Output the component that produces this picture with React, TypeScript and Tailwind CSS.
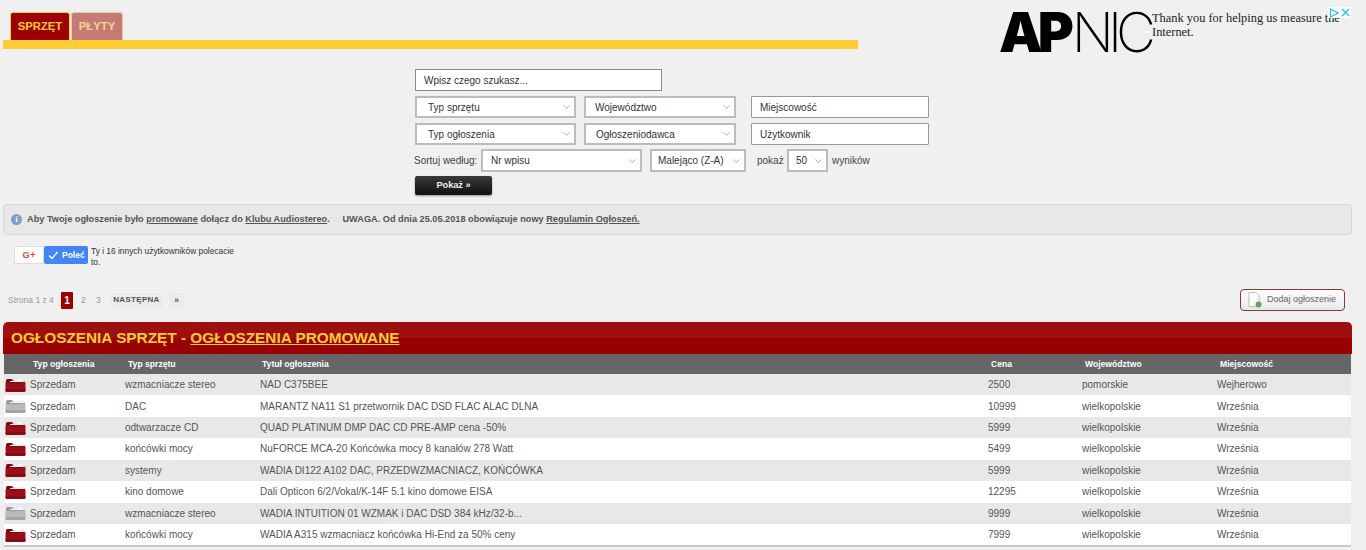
import { ChevronDown } from "lucide-react";

const rows = [
  [1, "wzmacniacze stereo", "NAD C375BEE", "2500", "pomorskie", "Wejherowo"],
  [0, "DAC", "MARANTZ NA11 S1 przetwornik DAC DSD FLAC ALAC DLNA", "10999", "wielkopolskie", "Września"],
  [1, "odtwarzacze CD", "QUAD PLATINUM DMP DAC CD PRE-AMP cena -50%", "5999", "wielkopolskie", "Września"],
  [1, "końcówki mocy", "NuFORCE MCA-20 Końcówka mocy 8 kanałów 278 Watt", "5499", "wielkopolskie", "Września"],
  [1, "systemy", "WADIA DI122 A102 DAC, PRZEDWZMACNIACZ, KOŃCÓWKA", "5999", "wielkopolskie", "Września"],
  [1, "kino domowe", "Dali Opticon 6/2/Vokal/K-14F 5.1 kino domowe EISA", "12295", "wielkopolskie", "Września"],
  [0, "wzmacniacze stereo", "WADIA INTUITION 01 WZMAK i DAC DSD 384 kHz/32-b...", "9999", "wielkopolskie", "Września"],
  [1, "końcówki mocy", "WADIA A315 wzmacniacz końcówka Hi-End za 50% ceny", "7999", "wielkopolskie", "Września"],
] as const;

function Folder({ red }: { red: boolean }) {
  const back = red ? "#7d0a12" : "#9a9a9a";
  const front = red ? "#9c0f1a" : "#b9b9b9";
  return (
    <svg width="21" height="16" viewBox="0 0 21 16" className="shrink-0">
      <path d="M1 3.5 Q1 2 2.5 2 H7 L8.5 3.5 H18 Q19.5 3.5 19.5 5 V8 H1 Z" fill={back} />
      <path d="M5 4.2 L18 1.6 L19 5 H5 Z" fill="#f4f4f4" />
      <path d="M0.5 5.6 Q8 7 20.5 5.2 V13.5 Q20.5 15 19 15 H2 Q0.5 15 0.5 13.5 Z" fill={front} />
      <path d="M0.5 12 H20.5 V13.5 Q20.5 15 19 15 H2 Q0.5 15 0.5 13.5 Z" fill={back} opacity="0.7" />
    </svg>
  );
}

function Sel({ label, wrap, pad }: { label: string; wrap: string; pad: string }) {
  return (
    <div className={`relative ${wrap}`}>
      <select className={`appearance-none block w-full h-full bg-white border-2 border-[#bcbcbc] text-[10px] text-[#333] font-['Liberation_Sans',Arial,sans-serif] ${pad}`}>
        <option>{label}</option>
      </select>
      <ChevronDown size={11} strokeWidth={1.5} className="absolute right-[4px] top-1/2 -translate-y-1/2 text-[#888] pointer-events-none" />
    </div>
  );
}

const inputCls =
  "h-[22px] bg-white border border-[#999] rounded-[1px] text-[10px] text-[#333] px-2 placeholder:text-[#333] font-['Liberation_Sans',Arial,sans-serif]";

export default function App() {
  return (
    <div className="w-[1366px] h-[550px] overflow-hidden bg-[#f0f0f0] text-[#444] font-['Liberation_Sans',Arial,sans-serif]">
      <div className="flex h-[69px] pl-[3px]">
        <div className="w-[855px] pt-[12px]">
          <div className="flex pl-[7px] h-[28px] gap-[1px]">
            <div className="w-[60px] flex items-center justify-center bg-[#9c0000] border border-[#ffcc33] border-b-0 rounded-t-[3px] text-[11.3px] font-bold text-[#ffcc33]">SPRZĘT</div>
            <div className="w-[52px] flex items-center justify-center bg-[#c67a78] border border-[#f0c890] border-b-0 rounded-t-[3px] text-[11.3px] font-bold text-[#f3d58c]">PŁYTY</div>
          </div>
          <div className="h-[9px] bg-[#ffcc33]" />
        </div>
        <div className="ml-[141px] w-[153px] pt-[12px] flex items-start text-black text-[55px] leading-[40px] font-['Inter',sans-serif] whitespace-nowrap">
          <span className="font-black tracking-[-5px]">AP</span>
          <span className="font-extralight tracking-[-6px] ml-[3px]">NIC</span>
        </div>
        <div className="w-[195px] pt-[11px] text-[12.4px] leading-[14px] text-[#222] font-['Liberation_Serif',serif]">Thank you for helping us measure the Internet.</div>
        <div className="relative">
          <div className="absolute left-[-19px] top-[7px] w-[23px] h-[11px] bg-white flex items-center justify-around">
            <svg width="10" height="10" viewBox="0 0 10 10"><path d="M1.5 1 L9 5 L1.5 9 Z" fill="none" stroke="#2bbfe8" strokeWidth="1.3" /></svg>
            <svg width="9" height="9" viewBox="0 0 9 9"><path d="M1 1 L8 8 M8 1 L1 8" stroke="#2bbfe8" strokeWidth="1.3" /></svg>
          </div>
        </div>
      </div>

      <div className="pl-[415px] h-[135px]">
        <input readOnly placeholder="Wpisz czego szukasz..." className="block w-[247px] h-[22px] bg-white border border-[#888] text-[10px] px-2 placeholder:text-[#333]" />
        <div className="flex mt-[5px]">
          <Sel label="Typ sprzętu" wrap="w-[161px] h-[22px]" pad="pl-[11px]" />
          <Sel label="Województwo" wrap="w-[152px] h-[22px] ml-[8px]" pad="pl-[9px]" />
          <input readOnly placeholder="Miejscowość" className={`${inputCls} w-[178px] ml-[15px]`} />
        </div>
        <div className="flex mt-[5px]">
          <Sel label="Typ ogłoszenia" wrap="w-[161px] h-[22px]" pad="pl-[11px]" />
          <Sel label="Ogłoszeniodawca" wrap="w-[152px] h-[22px] ml-[8px]" pad="pl-[10px]" />
          <input readOnly placeholder="Użytkownik" className={`${inputCls} w-[178px] ml-[15px]`} />
        </div>
        <div className="flex items-center mt-[4px] ml-[-1px] h-[23px] text-[10px] text-[#444]">
          <span className="w-[67px] whitespace-nowrap">Sortuj według:</span>
          <Sel label="Nr wpisu" wrap="w-[161px] h-[23px]" pad="pl-[8px]" />
          <Sel label="Malejąco (Z-A)" wrap="w-[96px] h-[23px] ml-[8px]" pad="pl-[6px]" />
          <span className="ml-[11px] w-[30px]">pokaż</span>
          <Sel label="50" wrap="w-[41px] h-[23px]" pad="pl-[7px]" />
          <span className="ml-[4px]">wyników</span>
        </div>
        <div className="mt-[4px] w-[77px] h-[19px] rounded-[2px] bg-gradient-to-b from-[#3a3a3a] to-[#111] shadow-[0_1px_2px_rgba(0,0,0,0.4)] flex items-center justify-center text-[9.2px] font-bold text-[#eee]">Pokaż »</div>
      </div>

      <div className="ml-[3px] w-[1349px] h-[31px] bg-[#e8e8e8] border border-[#d8d8d8] rounded-[4px] flex items-center pl-[7px] text-[9.2px] font-bold text-[#555] whitespace-pre">
        <span className="w-[11px] h-[11px] rounded-full bg-[#7f9fc9] text-white text-[8px] leading-[11px] text-center mr-[5px] font-['Liberation_Serif',serif]">i</span>
        Aby Twoje ogłoszenie było <u className="font-bold">promowane</u> dołącz do <u>Klubu Audiostereo</u>.     UWAGA. Od dnia 25.05.2018 obowiązuje nowy <u>Regulamin Ogłoszeń.</u>
      </div>

      <div className="flex ml-[14px] mt-[11px] h-[42px]">
        <div className="w-[30px] h-[18px] bg-white border border-[#ddd] flex items-center justify-center text-[9.5px] font-bold text-[#dd4b39]">G+</div>
        <div className="w-[44px] h-[18px] bg-[#4285f4] rounded-[2px] flex items-center pl-[4px] gap-[4px] text-[8.5px] font-bold text-white">
          <svg width="10" height="10" viewBox="0 0 10 10"><path d="M1 5.5 L4 8.5 L9.5 2" fill="none" stroke="#fff" strokeWidth="1.3" /></svg>
          Poleć
        </div>
        <div className="w-[150px] ml-[3px] text-[8.4px] leading-[11px] text-[#333]">Ty i 16 innych użytkowników polecacie to.</div>
      </div>

      <div className="flex items-center h-[24px] pl-[8px] text-[8.5px] text-[#999]">
        <span className="w-[53px] whitespace-nowrap">Strona 1 z 4</span>
        <span className="w-[12px] h-[17px] bg-[#9c0000] rounded-[1px] text-white font-bold text-[10px] flex items-center justify-center">1</span>
        <span className="ml-[7px] w-[15px] pl-[1px]">2</span>
        <span className="w-[15px] pl-[1px]">3</span>
        <span className="w-[53px] h-[15px] bg-[#ebebeb] flex items-center justify-center font-bold text-[#555] text-[8px] tracking-[0.3px]">NASTĘPNA</span>
        <span className="ml-[6px] w-[15px] h-[15px] bg-[#ebebeb] flex items-center justify-center font-bold text-[#555]">»</span>
        <div className="ml-auto mr-[21px] mb-[1px] w-[105px] h-[22px] bg-gradient-to-b from-white to-[#e8e8e8] border border-[#8a3a3a] rounded-[4px] flex items-center pl-[7px] gap-[5px] text-[9px] text-[#666] whitespace-nowrap">
          <svg width="14" height="16" viewBox="0 0 14 16"><path d="M1 .5 H8 L11 3.5 V14.5 H1 Z" fill="#fff" stroke="#bbb" /><circle cx="10.5" cy="12.5" r="3" fill="#5fa55a" /></svg>
          Dodaj ogłoszenie
        </div>
      </div>

      <div className="ml-[3px] mt-[10px] w-[1349px]">
        <div className="h-[32px] bg-gradient-to-b from-[#9e1010] from-50% to-[#990000] to-50% rounded-t-[5px] flex items-center pl-[8px] text-[15.35px] font-bold text-[#ffcc33]">
          <span>OGŁOSZENIA SPRZĘT - <u>OGŁOSZENIA PROMOWANE</u></span>
        </div>
        <div className="mx-[1px] bg-white border-b-2 border-[#c8c8c8]">
          <div className="flex items-center h-[20px] bg-[#666] text-[8.6px] font-bold text-white">
            <span className="w-[124px] pl-[29px]">Typ ogłoszenia</span>
            <span className="w-[134px]">Typ sprzętu</span>
            <span className="w-[729px]">Tytuł ogłoszenia</span>
            <span className="w-[94px]">Cena</span>
            <span className="w-[135px]">Województwo</span>
            <span>Miejscowość</span>
          </div>
          {rows.map((r, i) => (
            <div key={i} className={`flex items-center h-[21.43px] text-[10px] text-[#555] ${i % 2 === 0 ? "bg-[#e8e8e8]" : "bg-white"}`}>
              <span className="w-[121px] pl-[1px] flex items-center gap-[4px]"><Folder red={r[0] === 1} />Sprzedam</span>
              <span className="w-[135px]">{r[1]}</span>
              <span className="w-[728px]">{r[2]}</span>
              <span className="w-[94px]">{r[3]}</span>
              <span className="w-[135px]">{r[4]}</span>
              <span>{r[5]}</span>
            </div>
          ))}
        </div>
      </div>
    </div>
  );
}
